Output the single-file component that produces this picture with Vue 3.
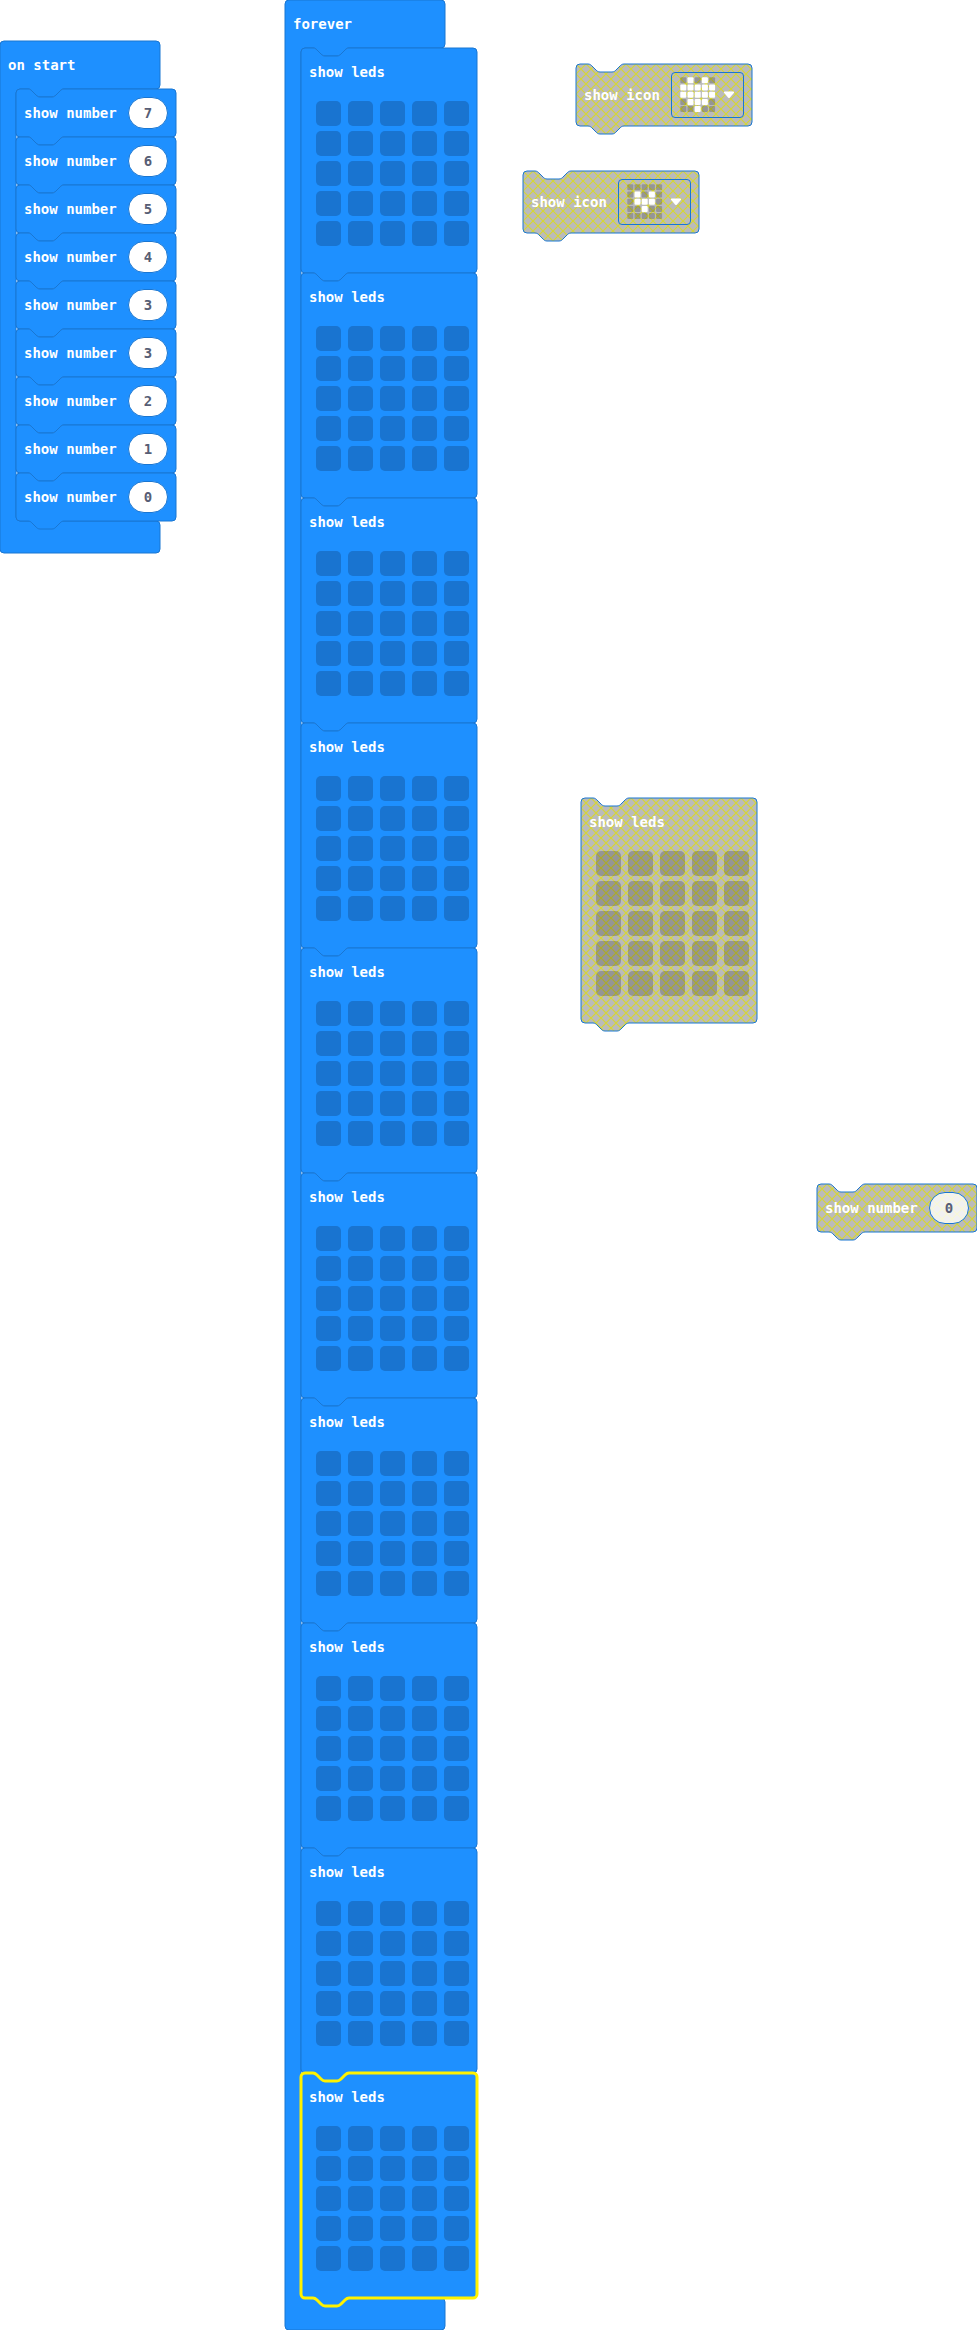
<script setup>
import { ref } from 'vue'

const NOTCH = 'h8 c2 0 3 1 4 2 l4 4 c1 1 2 2 4 2 h12 c2 0 3 -1 4 -2 l4 -4 c1 -1 2 -2 4 -2'
const TAB = 'c-2 0 -3 1 -4 2 l-4 4 c-1 1 -2 2 -4 2 h-12 c-2 0 -3 -1 -4 -2 l-4 -4 c-1 -1 -2 -2 -4 -2'

const HEADER = 48
const FOOTER = 32
const ARM = 160

const sizes = {
  number: { w: 160, h: 48 },
  leds: { w: 176, h: 225 },
  icon: { w: 176, h: 62 },
}

function statementPath(kind) {
  const { w, h } = sizes[kind]
  return `M0 4 a4 4 0 0 1 4 -4 ${NOTCH} H${w - 4} a4 4 0 0 1 4 4 V${h - 4} a4 4 0 0 1 -4 4 H48 ${TAB} H4 a4 4 0 0 1 -4 -4 Z`
}

function bodyHeight(stack) {
  return stack.blocks.reduce((sum, b) => sum + sizes[b.kind].h, 0)
}

function hatPath(stack) {
  const end = HEADER + bodyHeight(stack)
  return `M0 4 a4 4 0 0 1 4 -4 H${ARM - 4} a4 4 0 0 1 4 4 V${HEADER - 4} a4 4 0 0 1 -4 4 H64 ${TAB} H20 a4 4 0 0 0 -4 4 V${end - 4} a4 4 0 0 0 4 4 H${ARM - 4} a4 4 0 0 1 4 4 V${end + FOOTER - 4} a4 4 0 0 1 -4 4 H4 a4 4 0 0 1 -4 -4 Z`
}

const emptyLeds = () => Array(25).fill(false)

const stacks = ref([
  {
    id: 'start',
    title: 'on start',
    blocks: ['7', '6', '5', '4', '3', '3', '2', '1', '0'].map((value) => ({ kind: 'number', value })),
  },
  {
    id: 'forever',
    title: 'forever',
    blocks: Array.from({ length: 10 }, (_, i) => ({ kind: 'leds', leds: emptyLeds(), selected: i === 9 })),
  },
  { id: 'heart', disabled: true, blocks: [{ kind: 'icon', label: 'Heart', rows: ['01010', '11111', '11111', '01110', '00100'] }] },
  { id: 'small-heart', disabled: true, blocks: [{ kind: 'icon', label: 'Small heart', rows: ['00000', '01010', '01110', '00100', '00000'] }] },
  { id: 'loose-leds', disabled: true, blocks: [{ kind: 'leds', leds: emptyLeds() }] },
  { id: 'loose-number', disabled: true, blocks: [{ kind: 'number', value: '0' }] },
])

const titles = { number: 'show number', leds: 'show leds', icon: 'show icon' }
</script>

<template>
  <main class="workspace">
    <svg class="defs" aria-hidden="true">
      <pattern id="disabled-hatch" patternUnits="userSpaceOnUse" width="10" height="10">
        <rect width="10" height="10" fill="#aaa" />
        <path d="M-1 -1 L11 11 M11 -1 L-1 11" stroke="#cc0" stroke-width="1.2" />
      </pattern>
    </svg>

    <section v-for="stack in stacks" :key="stack.id" class="stack" :class="[stack.id, { disabled: stack.disabled, hat: stack.title }]">
      <svg v-if="stack.title" class="shape" aria-hidden="true">
        <path :d="hatPath(stack)" />
      </svg>
      <header v-if="stack.title" class="head">{{ stack.title }}</header>
      <div class="body">
        <div v-for="(block, i) in stack.blocks" :key="i" class="block" :class="[block.kind, { selected: block.selected }]">
          <svg class="shape" aria-hidden="true">
            <path :d="statementPath(block.kind)" />
          </svg>
          <template v-if="block.kind === 'number'">
            <label :for="`${stack.id}-${i}`">{{ titles.number }}</label>
            <input :id="`${stack.id}-${i}`" v-model="block.value" class="value" type="text" inputmode="numeric" />
          </template>
          <template v-else-if="block.kind === 'leds'">
            <span class="title">{{ titles.leds }}</span>
            <div class="matrix">
              <button
                v-for="(on, n) in block.leds"
                :key="n"
                type="button"
                class="led"
                :class="{ on }"
                :aria-pressed="on"
                :aria-label="`led ${n % 5}, ${Math.floor(n / 5)}`"
                @click="block.leds[n] = !on"
              ></button>
            </div>
          </template>
          <template v-else>
            <span>{{ titles.icon }}</span>
            <button type="button" class="picker" aria-haspopup="listbox" :aria-label="block.label">
              <svg class="glyph" viewBox="0 0 36 36" aria-hidden="true">
                <template v-for="(row, y) in block.rows" :key="y">
                  <rect
                    v-for="(cell, x) in row"
                    :key="x"
                    :x="x * 7.2 + 0.3"
                    :y="y * 7.2 + 0.3"
                    width="6"
                    height="6"
                    rx="1"
                    :class="cell === '1' ? 'lit' : 'dim'"
                  />
                </template>
              </svg>
              <svg class="caret" viewBox="0 0 12 8" aria-hidden="true">
                <path d="M1.6 0.5 H10.4 Q11.8 0.7 11 1.8 L7 6.5 Q6 7.6 5 6.5 L1 1.8 Q0.2 0.7 1.6 0.5 Z" />
              </svg>
            </button>
          </template>
        </div>
      </div>
    </section>
  </main>
</template>

<style>
body {
  margin: 0;
  background: #fff;
}
</style>

<style scoped>
.workspace {
  position: relative;
  min-height: 100vh;
  overflow: hidden;
  font: bold 14px/16px "DejaVu Sans Mono", "Liberation Mono", monospace;
  color: #fff;
}
.defs {
  position: absolute;
  width: 0;
  height: 0;
}
.stack {
  position: absolute;
}
.start { left: 0; top: 41px; }
.forever { left: 285px; top: 0; }
.heart { left: 576px; top: 64px; }
.small-heart { left: 523px; top: 171px; }
.loose-leds { left: 581px; top: 798px; }
.loose-number { left: 817px; top: 1184px; }

.hat {
  padding-bottom: 32px;
}
.hat .body {
  padding-left: 16px;
}
.head {
  position: relative;
  display: flex;
  align-items: center;
  height: 48px;
  padding-left: 8px;
}
.shape {
  position: absolute;
  left: 0;
  top: 0;
  width: 100%;
  height: 100%;
  overflow: visible;
  fill: #1e90ff;
  stroke: #1976d2;
  stroke-width: 1px;
  pointer-events: none;
}
.block {
  position: relative;
  box-sizing: border-box;
  display: flex;
  align-items: center;
  justify-content: space-between;
  padding: 8px;
}
.block > :not(.shape) {
  position: relative;
}
.number {
  width: 160px;
  height: 48px;
}
.leds {
  width: 176px;
  height: 225px;
  flex-direction: column;
  align-items: flex-start;
  justify-content: flex-start;
  padding: 16px 8px 27px 15px;
  gap: 21px;
}
.leds .title {
  margin-left: -7px;
}
.icon {
  width: 176px;
  height: 62px;
}
.value {
  box-sizing: border-box;
  width: 40px;
  height: 32px;
  padding: 0;
  border: 1px solid #1976d2;
  border-radius: 16px;
  background: #fff;
  color: #575e75;
  font: inherit;
  text-align: center;
}
.matrix {
  display: grid;
  grid-template-columns: repeat(5, 25px);
  grid-auto-rows: 25px;
  gap: 5px 7px;
}
.led {
  padding: 0;
  border: 0;
  border-radius: 5px;
  background: #1974d0;
}
.led.on {
  background: #fff;
}
.picker {
  box-sizing: border-box;
  display: flex;
  align-items: center;
  justify-content: space-between;
  width: 73px;
  height: 46px;
  padding: 0 8px;
  border: 1px solid #1976d2;
  border-radius: 4px;
  background: transparent;
}
.glyph {
  width: 36px;
  height: 36px;
}
.lit {
  fill: #fff;
}
.dim {
  fill: #000;
  fill-opacity: 0.2;
}
.caret {
  width: 12px;
  height: 8px;
  fill: #fff;
}
.selected .shape {
  stroke: #fff200;
  stroke-width: 3px;
}
.disabled .shape {
  fill: url(#disabled-hatch);
  fill-opacity: 0.8;
}
.disabled .led {
  background: rgba(0, 0, 0, 0.2);
}
.disabled .value {
  background: rgba(255, 255, 255, 0.8);
}
</style>
